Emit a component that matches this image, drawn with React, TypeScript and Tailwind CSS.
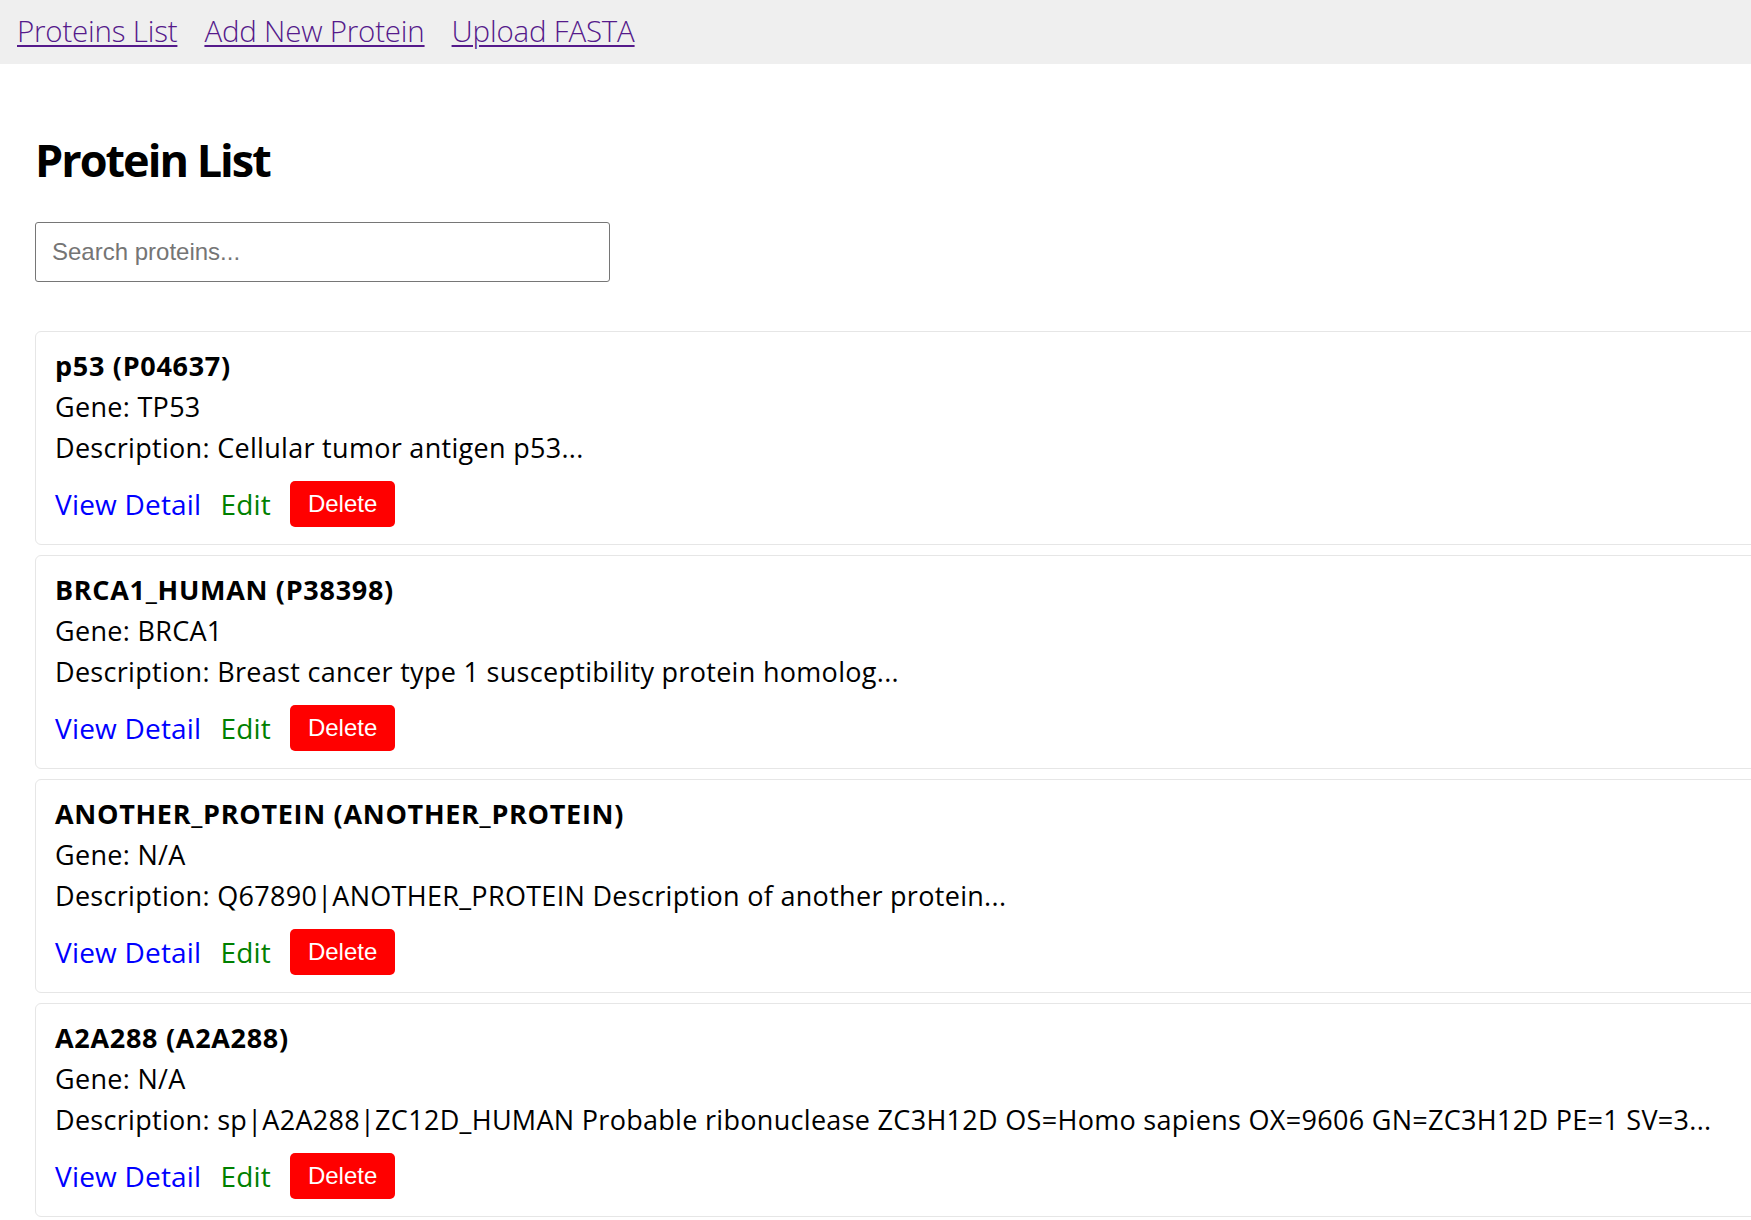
const proteins = [
  { name: "p53", id: "P04637", gene: "TP53", description: "Cellular tumor antigen p53..." },
  { name: "BRCA1_HUMAN", id: "P38398", gene: "BRCA1", description: "Breast cancer type 1 susceptibility protein homolog..." },
  { name: "ANOTHER_PROTEIN", id: "ANOTHER_PROTEIN", gene: "N/A", description: "Q67890|ANOTHER_PROTEIN Description of another protein..." },
  {
    name: "A2A288",
    id: "A2A288",
    gene: "N/A",
    description: "sp|A2A288|ZC12D_HUMAN Probable ribonuclease ZC3H12D OS=Homo sapiens OX=9606 GN=ZC3H12D PE=1 SV=3...",
  },
];

const App = () => {
  return (
    <div className="h-screen w-full overflow-hidden bg-white font-['Open_Sans',sans-serif] text-black">
      {/* Top nav */}
      <nav className="flex h-16 items-center gap-[27px] bg-[#efefef] pb-[2px] pl-[17px]">
        {["Proteins List", "Add New Protein", "Upload FASTA"].map((label) => (
          <a
            key={label}
            href="#"
            className="text-[29.5px] font-light leading-none tracking-[-0.2px] text-[#551a8b] underline decoration-2 underline-offset-[3px]"
          >
            {label}
          </a>
        ))}
      </nav>

      <main className="pl-[35px]">
        <h1 className="mt-[68px] text-[45px] font-bold leading-[56px] tracking-[-2px]">Protein List</h1>

        <input
          type="text"
          placeholder="Search proteins..."
          className="mt-[34px] h-[60px] w-[575px] rounded-[3px] border border-[#767676] pl-4 font-['Liberation_Sans',Arial,sans-serif] text-[24px] placeholder:text-[#757575]"
        />

        {/* Protein cards */}
        <div className="mt-[49px] flex flex-col gap-[10px]">
          {proteins.map((p) => (
            <div key={p.id} className="w-[1760px] rounded-md border border-[#e6e6e6] pb-[17px] pl-[19px] pt-[13px]">
              <div className="text-[27px] font-bold leading-[41px] tracking-[0.7px]">
                {p.name} ({p.id})
              </div>
              <div className="text-[27px] leading-[41px] tracking-[0.3px]">Gene: {p.gene}</div>
              <div className="text-[27px] leading-[41px] tracking-[0.3px]">Description: {p.description}</div>
              <div className="mt-[13px] flex items-center gap-[19px]">
                <a href="#" className="text-[28px] leading-[46px] tracking-[0.2px] text-[#0000ff]">
                  View Detail
                </a>
                <a href="#" className="text-[28px] leading-[46px] tracking-[0.2px] text-[#008000]">
                  Edit
                </a>
                <button className="h-[46px] rounded-[5px] bg-[#ff0000] px-[18px] font-['Liberation_Sans',Arial,sans-serif] text-[24px] text-white">
                  Delete
                </button>
              </div>
            </div>
          ))}
        </div>
      </main>
    </div>
  );
};

export default App;
